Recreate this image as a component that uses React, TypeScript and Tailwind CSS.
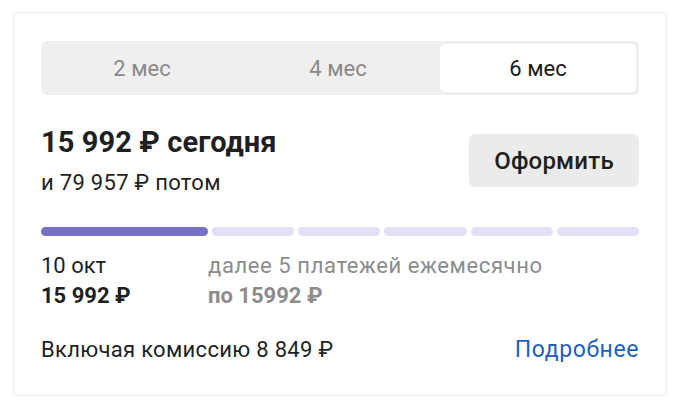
import React from "react";

export default function App() {
  const font = { fontFamily: "Roboto, 'Noto Sans', sans-serif" };
  return (
    <div className="w-[680px] h-[406px] bg-white" style={font}>
      <div className="pt-[12px] pl-[13px]">
        <div className="w-[654px] h-[384px] border border-[#ebebeb] rounded-[3px] px-[27px] pt-[28px] flex flex-col">
          <div className="h-[54px] bg-[#efefef] rounded-[6px] p-[3px] flex">
            <div className="flex-1 flex items-center justify-center text-[22px] text-[#8a8a8a]">2 мес</div>
            <div className="flex-1 flex items-center justify-center text-[22px] text-[#8a8a8a]">4 мес</div>
            <div className="flex-1 ml-[4px] flex items-center justify-center text-[22px] text-[#1a1a1a] bg-white rounded-[5px]">6 мес</div>
          </div>
          <div className="flex justify-between items-start mt-[30px]">
            <div className="flex flex-col">
              <div className="text-[29px] font-bold text-[#1f1f1f] leading-[34px] tracking-[0.1px]">15 992 ₽ сегодня</div>
              <div className="text-[22px] text-[#1f1f1f] leading-[28px] mt-[10px] tracking-[0.3px]">и 79 957 ₽ потом</div>
            </div>
            <button className="mt-[9px] w-[170px] h-[53px] bg-[#ebebeb] rounded-[6px] text-[24px] font-medium text-[#1f1f1f] tracking-[0.2px]">Оформить</button>
          </div>
          <div className="flex gap-[4px] mt-[30px] h-[9px]">
            <div className="w-[167px] rounded-full bg-[#7471c6]"></div>
            <div className="flex-1 rounded-full bg-[#e2e0f4]"></div>
            <div className="flex-1 rounded-full bg-[#e2e0f4]"></div>
            <div className="flex-1 rounded-full bg-[#e2e0f4]"></div>
            <div className="flex-1 rounded-full bg-[#e2e0f4]"></div>
            <div className="flex-1 rounded-full bg-[#e2e0f4]"></div>
          </div>
          <div className="flex mt-[15px]">
            <div className="w-[167px] flex flex-col">
              <div className="text-[22px] text-[#1f1f1f] leading-[30px]">10 окт</div>
              <div className="text-[22px] font-bold text-[#1f1f1f] leading-[30px]">15 992 ₽</div>
            </div>
            <div className="flex flex-col">
              <div className="text-[22px] text-[#8c8c8c] leading-[30px] tracking-[0.6px]">далее 5 платежей ежемесячно</div>
              <div className="text-[22px] font-bold text-[#8c8c8c] leading-[30px]">по 15992 ₽</div>
            </div>
          </div>
          <div className="flex justify-between items-center mt-[25px] leading-[28px]">
            <div className="text-[22px] text-[#1f1f1f] tracking-[0.3px]">Включая комиссию 8 849 ₽</div>
            <div className="text-[23px] text-[#1f5fbf] tracking-[0.6px]">Подробнее</div>
          </div>
        </div>
      </div>
    </div>
  );
}
